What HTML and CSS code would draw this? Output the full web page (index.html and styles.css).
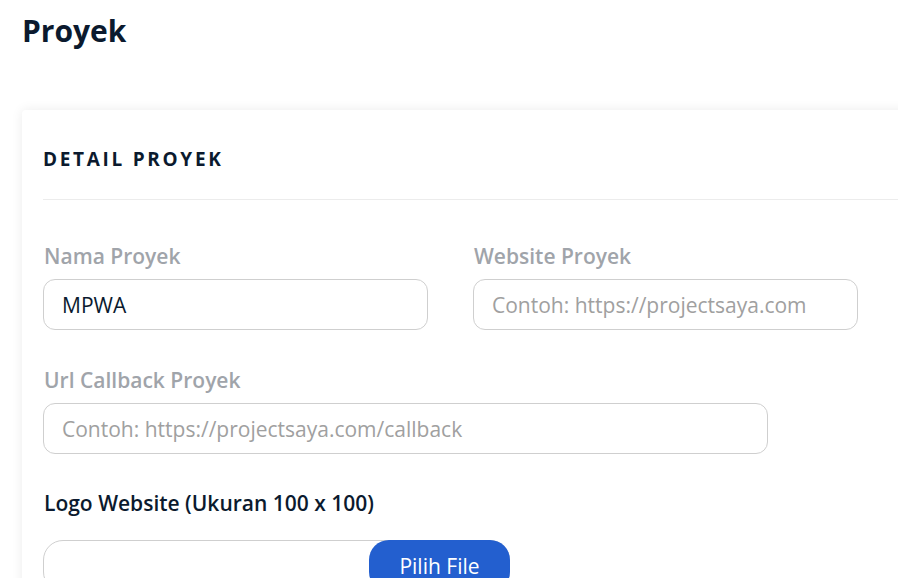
FILE: index.html
```html
<!DOCTYPE html>
<html lang="id">
<head>
  <meta charset="UTF-8">
  <meta name="viewport" content="width=device-width, initial-scale=1.0">
  <title>Proyek</title>
  <link rel="stylesheet" href="styles.css">
</head>
<body>
  <div class="page">
    <h1 class="page-title">Proyek</h1>
    <div class="card">
      <h2 class="card-title">DETAIL PROYEK</h2>
      <div class="card-body">
        <div class="row">
          <div class="field">
            <label for="nama">Nama Proyek</label>
            <input type="text" id="nama" value="MPWA">
          </div>
          <div class="field">
            <label for="website">Website Proyek</label>
            <input type="text" id="website" placeholder="Contoh: https://projectsaya.com">
          </div>
        </div>
        <div class="field wide">
          <label for="callback">Url Callback Proyek</label>
          <input type="text" id="callback" placeholder="Contoh: https://projectsaya.com/callback">
        </div>
        <div class="field">
          <label class="dark" for="logo">Logo Website (Ukuran 100 x 100)</label>
          <div class="file-box">
            <span class="file-name"></span>
            <button class="file-btn">Pilih File</button>
          </div>
        </div>
      </div>
    </div>
  </div>
</body>
</html>
```

FILE: styles.css
```css
body {
  margin: 0;
  padding: 0;
  background-color: #fff;
  font-family: 'Open Sans', 'Noto Sans', sans-serif;
  overflow: hidden;
}
.page {
  padding: 9px 0 0 22px;
}
.page-title {
  margin: 0;
  font-size: 30px;
  font-weight: 700;
  color: #0b1a2e;
  line-height: 44px;
}
.card {
  margin-top: 57px;
  width: 920px;
  background-color: #fff;
  border-radius: 4px;
  box-shadow: 0px 0px 12px rgba(0, 0, 0, 0.08);
  padding: 0 0 40px 21px;
}
.card-title {
  margin: 0;
  padding: 36px 0 27px 0;
  font-size: 19px;
  font-weight: 700;
  letter-spacing: 2.7px;
  color: #0b1a2e;
  line-height: 26px;
  border-bottom: 1px solid #ececec;
}
.card-body {
  padding-top: 43px;
}
.row {
  display: flex;
  gap: 45px;
}
.field {
  display: flex;
  flex-direction: column;
  width: 385px;
  margin-bottom: 37px;
}
.field.wide {
  width: 725px;
  margin-bottom: 36px;
}
label {
  font-size: 21px;
  font-weight: 600;
  color: #a0a4aa;
  line-height: 26px;
  margin-bottom: 10px;
  padding-left: 1px;
}
label.dark {
  color: #0b1a2e;
  margin-bottom: 24px;
}
input {
  height: 51px;
  box-sizing: border-box;
  border: 1px solid #cfcfcf;
  border-radius: 12px;
  padding: 0 18px;
  font-family: 'Open Sans', 'Noto Sans', sans-serif;
  font-size: 21px;
  color: #0b1a2e;
  outline: none;
}
input::placeholder {
  color: #a0a0a0;
}
.file-box {
  display: flex;
  width: 467px;
  height: 52px;
  box-sizing: border-box;
  border: 1px solid #cfcfcf;
  border-radius: 20px;
}
.file-name {
  flex: 1;
}
.file-btn {
  width: 141px;
  height: 52px;
  margin-top: -1px;
  margin-right: -1px;
  background-color: #235fcf;
  color: #fff;
  border: none;
  border-radius: 20px;
  font-family: 'Open Sans', 'Noto Sans', sans-serif;
  font-size: 21px;
  padding: 0;
}
```
